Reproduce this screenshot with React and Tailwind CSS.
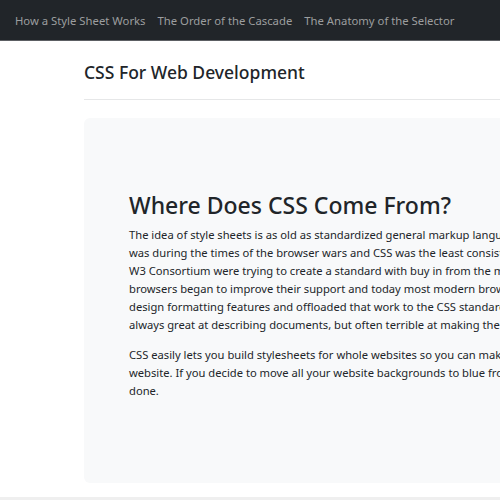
import React from "react";

const links = [
  "How a Style Sheet Works",
  "The Order of the Cascade",
  "The Anatomy of the Selector",
];

function App() {
  return (
    <div
      className="w-[500px] h-[500px] overflow-hidden bg-white"
      style={{ fontFamily: '"Noto Sans", "Open Sans", sans-serif' }}
    >
      <nav className="h-[41px] bg-[#212529] border-b border-[#5c5f63] flex items-center px-[9px] pt-[2px]">
        {links.map((l) => (
          <a key={l} href="#" className="px-[6px] text-[11.3px] text-[#9c9e9f] whitespace-nowrap">
            {l}
          </a>
        ))}
      </nav>

      <div className="pl-[84px] w-[900px]">
        <header className="pt-[21px] pb-[17px] border-b border-[#e6e7e8]">
          <h4 className="text-[17.5px] leading-[20px] text-[#212529] font-medium">CSS For Web Development</h4>
        </header>

        <div className="mt-[18px] h-[365px] bg-[#f8f9fa] rounded-[6px] px-[45px] pt-[72px]">
          <h1 className="text-[23px] leading-[30px] font-medium text-[#212529] mb-[6px]">
            Where Does CSS Come From?
          </h1>
          <p className="text-[11.2px] leading-[18px] text-[#212529] whitespace-nowrap mb-[12px]">
            The idea of style sheets is as old as standardized general markup language (SGML) and the early web.<br />
            was during the times of the browser wars and CSS was the least consistent part of every page layout.<br />
            W3 Consortium were trying to create a standard with buy in from the major browser vendors of the day.<br />
            browsers began to improve their support and today most modern browsers follow the standard closely.<br />
            design formatting features and offloaded that work to the CSS standard, which made HTML cleaner. HTML is<br />
            always great at describing documents, but often terrible at making them look good on their own.
          </p>
          <p className="text-[11.2px] leading-[18px] text-[#212529] whitespace-nowrap">
            CSS easily lets you build stylesheets for whole websites so you can make a single change across the entire<br />
            website. If you decide to move all your website backgrounds to blue from white, one small edit and it is<br />
            done.
          </p>
        </div>
      </div>
      <div className="mt-[14px] h-[4px] bg-[#efefef]" />
    </div>
  );
}

export default App;
